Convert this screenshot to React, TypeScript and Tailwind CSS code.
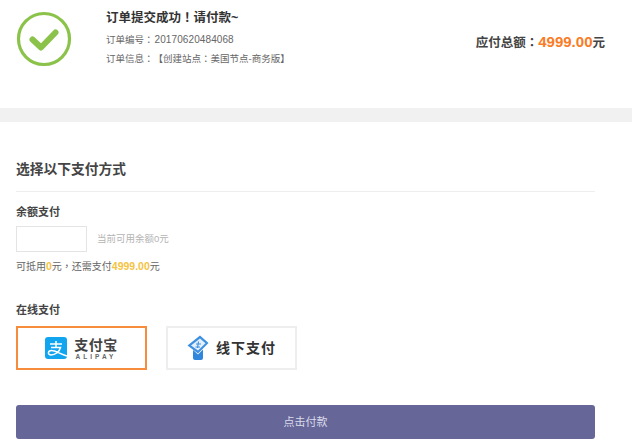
const FONT = '"Liberation Sans", "Noto Sans CJK TC", sans-serif';

function CheckIcon() {
  return (
    <svg width="56" height="56" viewBox="0 0 56 56" fill="none">
      <circle cx="28" cy="28" r="25.5" stroke="#8bc34a" strokeWidth="3.2" />
      <path d="M16.5 28.5 L25 36.5 L39.5 21.5" stroke="#8bc34a" strokeWidth="6" strokeLinecap="round" strokeLinejoin="round" />
    </svg>
  );
}

function AlipayIcon() {
  return (
    <svg width="22" height="22" viewBox="0 0 22 22" fill="none">
      <rect width="22" height="22" rx="3" fill="#12a5ef" />
      <path d="M5 7H17M11 4V10M6 10.500H15.500C14.500 14.500 10.500 18 6 18C2.500 18 2.500 13.500 6.500 13.500C10.500 13.500 15 17 22 19" stroke="#fff" strokeWidth="1.500" />
    </svg>
  );
}

function OfflineIcon() {
  return (
    <svg width="22" height="26" viewBox="0 0 22 26" fill="none">
      <path d="M13 0.500 L21.500 8 L11 18.500 L0.500 10.500 Z" fill="#3d8fe0" />
      <path d="M13 3.500 L18.500 8.200 L11 15.500 L4 10.500 Z" fill="#e4f0fb" />
      <path d="M9 9H14M11.500 6.500L10.500 13M8.500 12H13" stroke="#3d8fe0" strokeWidth="1.100" />
      <path d="M6 15 L11 19.500 L16 14.500 V23 Q16 25 14 25 H8 Q6 25 6 23 Z" fill="#2f86dd" />
    </svg>
  );
}

export default function App() {
  return (
    <div className="h-[443px] w-[632px] overflow-hidden bg-white text-[#555] [text-spacing-trim:space-all]" style={{ fontFamily: FONT }}>
      {/* order summary */}
      <div className="flex h-[108px] items-start pl-[16px] pr-[27px] pt-[11px]">
        <CheckIcon />
        <div className="ml-[34px] flex-1">
          <p className="text-[12.500px] font-bold leading-[14px] text-[#333]">订单提交成功！请付款~</p>
          <p className="mt-[9px] text-[9.500px] leading-[12px] text-[#666]">订单编号：<span className="ml-[1px] text-[10px] tracking-[0.100px]">20170620484068</span></p>
          <p className="mt-[7px] text-[9.500px] leading-[12px] text-[#666]">订单信息：【创建站点：美国节点-商务版】</p>
        </div>
        <p className="mt-[20px] text-[12.500px] font-bold leading-[22px] text-[#444]">
          应付总额：<span className="text-[15px] text-[#f97b25]">4999.00</span>元
        </p>
      </div>
      <div className="h-[14px] bg-[#f1f1f1]" />

      <div className="w-[595px] pl-[16px]">
        <h2 className="border-b border-[#eee] pb-[12px] pt-[39px] text-[13.750px] font-bold leading-[18px] text-[#444]">选择以下支付方式</h2>

        <p className="mt-[13px] text-[11px] font-bold leading-[14px] text-[#444]">余额支付</p>
        <div className="mt-[7px] flex items-center gap-[10px]">
          <input className="h-[26px] w-[71px] border border-[#e4e4e4] bg-white" />
          <span className="text-[9.500px] text-[#b4b4b4]">当前可用余额0元</span>
        </div>
        <p className="mt-[8px] text-[10px] leading-[12px] text-[#666]">
          可抵用<span className="text-[10.500px] font-bold text-[#f5c342]">0</span>元，还需支付<span className="text-[10.500px] font-bold text-[#f5c342]">4999.00</span>元
        </p>

        <p className="mt-[30px] text-[11px] font-bold leading-[14px] text-[#444]">在线支付</p>
        <div className="mt-[9px] flex gap-[19px]">
          <button className="flex h-[44px] w-[131px] items-center justify-center gap-[7px] border-2 border-[#f78c3c] bg-white">
            <AlipayIcon />
            <span className="flex flex-col items-center pt-[1px]">
              <span className="text-[14px] font-bold leading-[15px] tracking-[0.500px] text-[#444]">支付宝</span>
              <span className="text-[6.500px] font-bold leading-[7px] tracking-[3px] text-[#666]">ALIPAY</span>
            </span>
          </button>
          <button className="flex h-[44px] w-[131px] items-center justify-center gap-[7px] border-2 border-[#eeeeee] bg-white">
            <OfflineIcon />
            <span className="text-[14px] font-bold tracking-[1px] text-[#333]">线下支付</span>
          </button>
        </div>

        <button className="mt-[35px] h-[34px] w-[579px] rounded-[3px] bg-[#666699] text-[11px] text-[#dcdcea]">点击付款</button>
      </div>
    </div>
  );
}
